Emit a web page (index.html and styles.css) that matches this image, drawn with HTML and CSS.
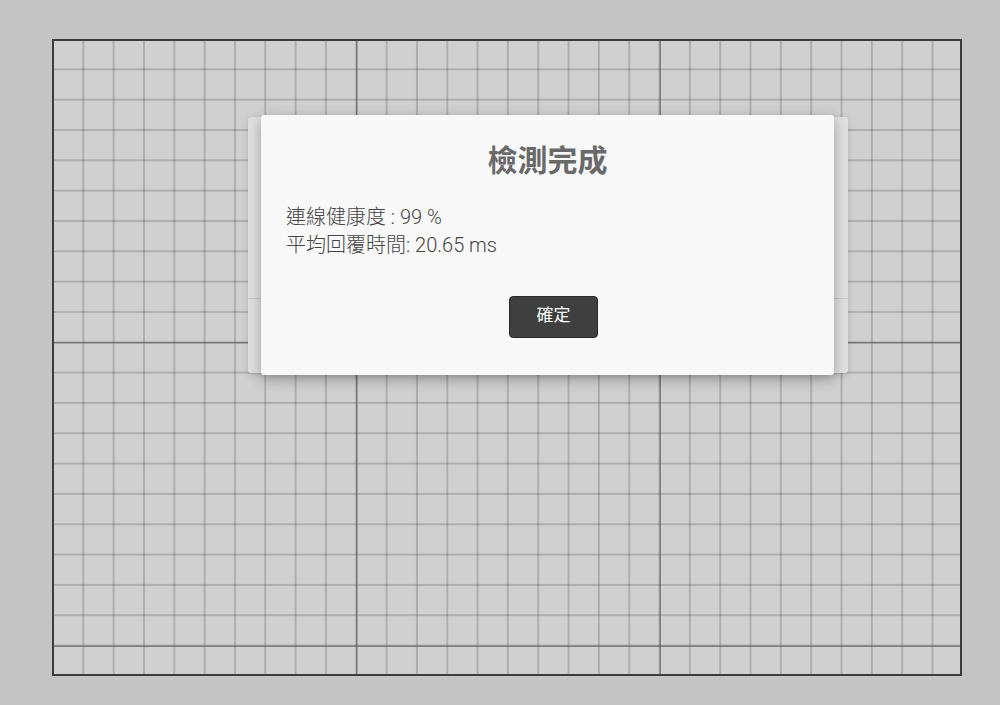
FILE: index.html
```html
<!DOCTYPE html>
<html lang="zh-Hant">
<head>
  <meta charset="UTF-8">
  <meta name="viewport" content="width=device-width, initial-scale=1.0">
  <title>檢測完成</title>
  <link rel="stylesheet" href="styles.css">
</head>
<body>
  <div class="board">
    <div class="back-panel">
      <div class="back-footer"></div>
    </div>

    <div class="dialog">
      <h2 class="dialog-title">檢測完成</h2>
      <div class="dialog-body">
        <p>連線健康度 : 99 %</p>
        <p>平均回覆時間: 20.65 ms</p>
      </div>
      <div class="dialog-actions">
        <button class="btn-ok">確定</button>
      </div>
    </div>
  </div>
</body>
</html>
```

FILE: styles.css
```css
body {
  margin: 0;
  padding: 39px 0 0 52px;
  background: #c4c4c4;
  font-family: Roboto, "Noto Sans CJK TC", sans-serif;
  height: 705px;
  box-sizing: border-box;
  overflow: hidden;
}
.board {
  position: relative;
  width: 910px;
  height: 637px;
  box-sizing: border-box;
  border: 2px solid #3c3c3c;
  background-color: #d0d0d0;
  background-origin: border-box;
  background-image:
    linear-gradient(to right, transparent 0.5px, #5c5c5c 0.5px, #5c5c5c 1.5px, transparent 1.5px),
    linear-gradient(to bottom, transparent 0.5px, #5c5c5c 0.5px, #5c5c5c 1.5px, transparent 1.5px),
    linear-gradient(to right, rgba(0, 0, 0, 0.1) 0, rgba(0, 0, 0, 0.22) 1px, rgba(0, 0, 0, 0.1) 2px, transparent 2px),
    linear-gradient(to bottom, rgba(0, 0, 0, 0.1) 0, rgba(0, 0, 0, 0.22) 1px, rgba(0, 0, 0, 0.1) 2px, transparent 2px);
  background-size:
    303.33px 303.33px,
    303.33px 303.33px,
    30.33px 30.33px,
    30.33px 30.33px;
  background-position: 0 -1px, 0 -1px, 0 -1px, 0 -1px;
}
.back-panel {
  position: absolute;
  left: 194px;
  top: 76px;
  width: 600px;
  height: 256px;
  background: #e0e0e0;
  border-radius: 3px;
  box-shadow: 0 2px 6px rgba(0, 0, 0, 0.15);
}
.back-footer {
  margin-top: 181px;
  border-top: 1px solid #c9c9c9;
}
.dialog {
  position: absolute;
  left: 207px;
  top: 74px;
  width: 573px;
  height: 260px;
  box-sizing: border-box;
  padding: 28px 25px 0;
  background: #f8f8f8;
  border-radius: 3px;
  box-shadow: 0 4px 14px rgba(0, 0, 0, 0.3);
  display: flex;
  flex-direction: column;
}
.dialog-title {
  margin: 0;
  text-align: center;
  font-size: 30px;
  line-height: 36px;
  font-weight: bold;
  color: #696969;
}
.dialog-body {
  margin-top: 24px;
  color: #444;
  font-size: 20px;
  font-weight: 300;
  line-height: 28px;
}
.dialog-body p {
  margin: 0;
}
.dialog-body .gap {
  letter-spacing: 0.1em;
}
.dialog-actions {
  margin-top: 37px;
  display: flex;
  justify-content: center;
  padding-left: 12px;
}
.btn-ok {
  width: 89px;
  height: 42px;
  padding: 0 0 3px;
  background: #3f3f3f;
  border: 1px solid #2b2b2b;
  border-radius: 4px;
  color: #fff;
  font-family: Roboto, "Noto Sans CJK TC", sans-serif;
  font-size: 17px;
  line-height: 1;
}
```
